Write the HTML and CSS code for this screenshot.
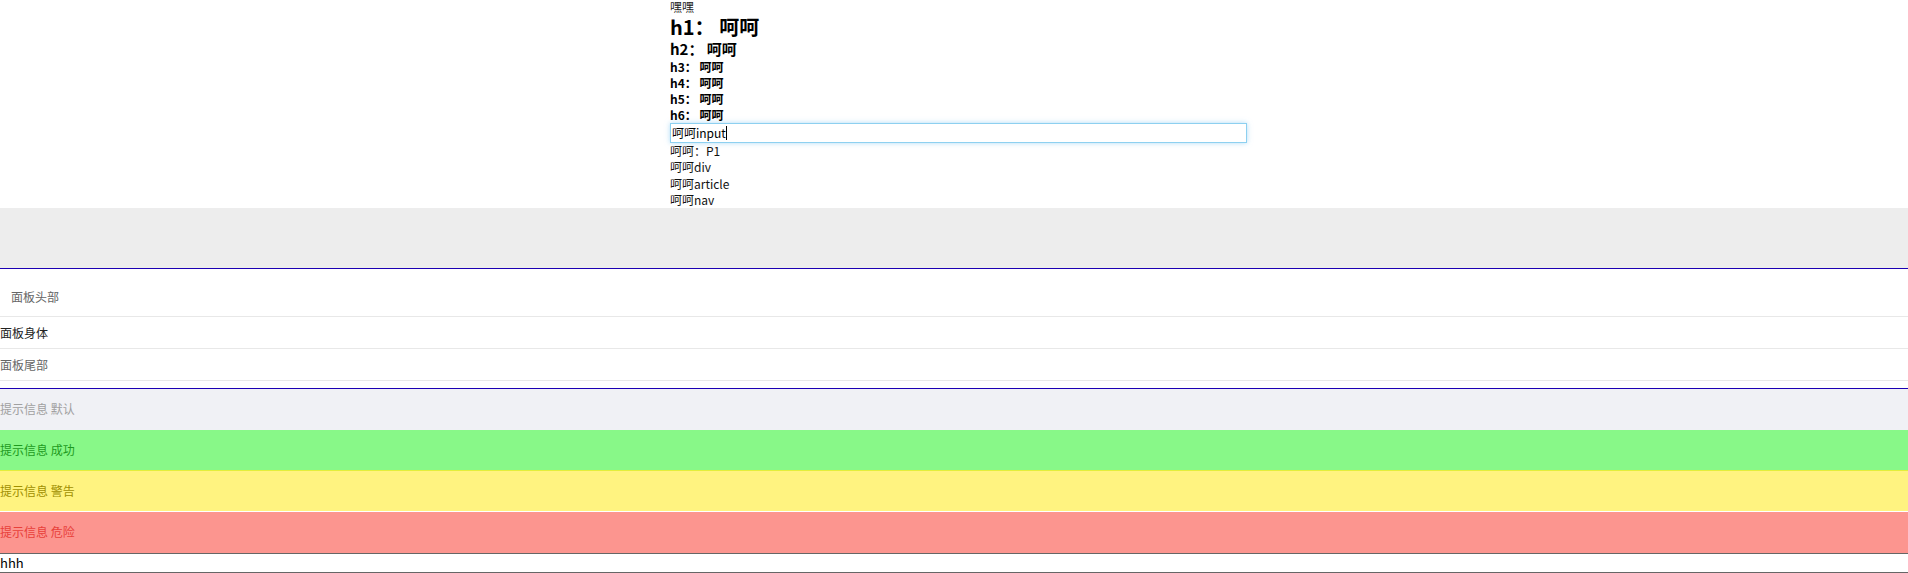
FILE: index.html
```html
<!DOCTYPE html>
<html lang="zh-CN">
<head>
<meta charset="utf-8">
<title>Demo</title>
<link rel="stylesheet" href="styles.css">
</head>
<body>
<div class="top">
  <div class="greet">嘿嘿</div>
  <h1 class="h h1">h1： 呵呵</h1>
  <h2 class="h h2">h2： 呵呵</h2>
  <h3 class="h hs">h3： 呵呵</h3>
  <h4 class="h hs">h4： 呵呵</h4>
  <h5 class="h hs">h5： 呵呵</h5>
  <h6 class="h hs">h6： 呵呵</h6>
  <div class="field"><span class="field-text">呵呵input</span><span class="caret"></span></div>
  <p class="line">呵呵：P1</p>
  <div class="line">呵呵div</div>
  <article class="line">呵呵article</article>
  <nav class="line">呵呵nav</nav>
</div>
<div class="band"></div>
<div class="panel-wrap">
  <div class="panel-head">面板头部</div>
  <div class="panel-body">面板身体</div>
  <div class="panel-foot">面板尾部</div>
</div>
<div class="alert alert-default">提示信息 默认</div>
<div class="alert alert-success">提示信息 成功</div>
<div class="alert alert-warning">提示信息 警告</div>
<div class="alert alert-danger">提示信息 危险</div>
<div class="bottom">hhh</div>
</body>
</html>
```
FILE: styles.css
```css
html, body {
  margin: 0;
  padding: 0;
  background: #fff;
}
body {
  font-family: "Noto Sans CJK SC", "Noto Sans", sans-serif;
  font-size: 12px;
  color: #111;
}
.top {
  width: 577px;
  margin-left: 670px;
}
.greet {
  line-height: 14px;
  color: #222;
}
.h {
  margin: 0;
  font-weight: bold;
  color: #000;
}
.h1 {
  font-size: 20px;
  line-height: 25px;
}
.h2 {
  font-size: 15px;
  line-height: 20px;
}
.hs {
  font-size: 12px;
  line-height: 16px;
}
.field {
  box-sizing: border-box;
  height: 20px;
  border: 1px solid #8dd0f0;
  box-shadow: 0 0 5px rgba(110, 190, 240, 0.55);
  line-height: 18px;
  padding: 0 1px;
  display: flex;
  align-items: center;
  color: #000;
}
.caret {
  width: 1px;
  height: 14px;
  background: #000;
}
.line {
  margin: 0;
  line-height: 16.25px;
  color: #111;
}
.band {
  height: 60px;
  background: #ededed;
  border-bottom: 1px solid #1c00b4;
}
.panel-wrap {
  padding-bottom: 7px;
  border-bottom: 1px solid #1c00b4;
}
.panel-head {
  padding: 20px 11px 11px;
  line-height: 16px;
  color: #666;
  border-bottom: 1px solid #e8e8e8;
}
.panel-body {
  padding: 8px 0 7px;
  line-height: 16px;
  color: #222;
  border-bottom: 1px solid #e8e8e8;
}
.panel-foot {
  padding: 8px 0 7px;
  line-height: 16px;
  color: #666;
  border-bottom: 1px solid #e8e8e8;
}
.alert {
  line-height: 16px;
  padding: 12px 0;
}
.alert-default {
  background: #f0f1f5;
  color: #a0a0a0;
  padding-bottom: 13px;
}
.alert-success {
  background: #88f888;
  color: #1e9a1e;
}
.alert-warning {
  background: #fff380;
  color: #a08f00;
  border-top: 1px solid #e2ee3c;
  border-bottom: 1px solid #fff;
}
.alert-danger {
  background: #fc958f;
  color: #e8403a;
  padding-bottom: 13px;
}
.bottom {
  border-top: 1px solid #666;
  border-bottom: 1px solid #666;
  line-height: 18px;
  font-size: 13px;
  color: #000;
}
```
